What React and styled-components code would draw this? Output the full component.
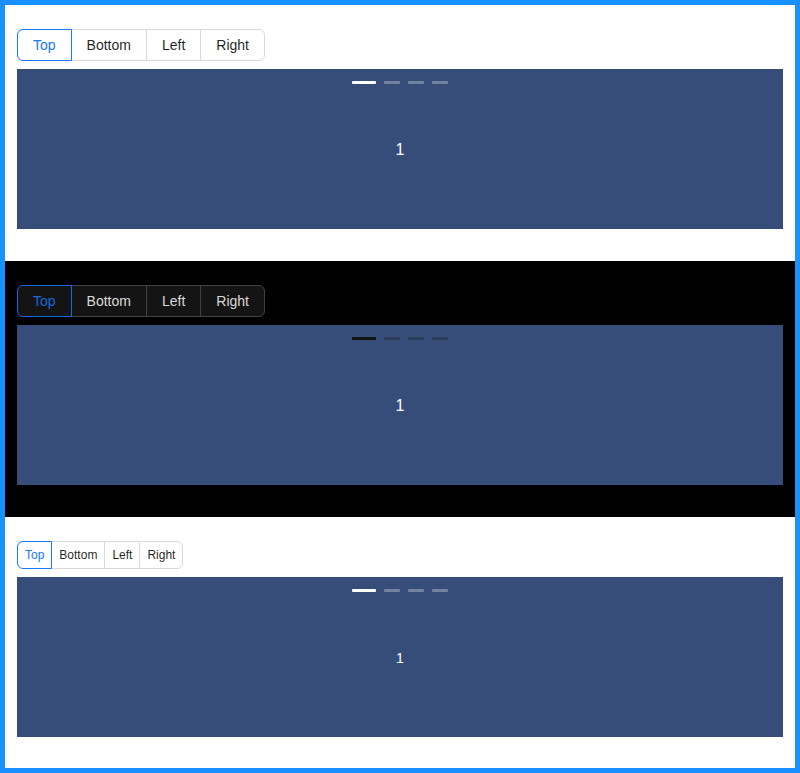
import React, { useState } from 'react';
import styled, { createGlobalStyle, css } from 'styled-components';

const GlobalStyle = createGlobalStyle`
  html, body {
    margin: 0;
    padding: 0;
    background: #ffffff;
  }
  body {
    font-family: 'Liberation Sans', Arial, sans-serif;
  }
`;

const palettes = {
  light: {
    bg: '#ffffff',
    btnBg: '#ffffff',
    btnBorder: '#d9d9d9',
    btnText: 'rgba(0, 0, 0, 0.88)',
    active: '#1677ff',
    dot: '#ffffff',
  },
  dark: {
    bg: '#000000',
    btnBg: '#141414',
    btnBorder: '#424242',
    btnText: 'rgba(255, 255, 255, 0.85)',
    active: '#1668dc',
    dot: '#141414',
  },
};

const sizes = {
  middle: { height: 32, font: 14, pad: 15, radius: 6, slideFont: 16 },
  small: { height: 28, font: 12, pad: 7, radius: 6, slideFont: 14 },
};

const positions = ['Top', 'Bottom', 'Left', 'Right'];

const Frame = styled.div`
  box-sizing: border-box;
  width: 800px;
  height: 773px;
  border: 5px solid #1890ff;
  overflow: hidden;
`;

const Section = styled.section`
  display: flex;
  flex-direction: column;
  gap: 8px;
  padding: 24px 12px 32px;
  background: ${({ palette }) => palette.bg};
`;

const Group = styled.div`
  display: flex;
  align-self: flex-start;
`;

const RadioButton = styled.button`
  box-sizing: border-box;
  height: ${({ size }) => size.height}px;
  padding: 0 ${({ size }) => size.pad}px;
  margin: 0;
  margin-left: -1px;
  border: 1px solid ${({ palette }) => palette.btnBorder};
  background: ${({ palette }) => palette.btnBg};
  color: ${({ palette }) => palette.btnText};
  font-family: 'Liberation Sans', Arial, sans-serif;
  font-size: ${({ size }) => size.font}px;
  line-height: ${({ size }) => size.height - 2}px;
  cursor: pointer;
  position: relative;

  &:first-child {
    margin-left: 0;
    border-radius: ${({ size }) => `${size.radius}px 0 0 ${size.radius}px`};
  }
  &:last-child {
    border-radius: ${({ size }) => `0 ${size.radius}px ${size.radius}px 0`};
  }

  ${({ checked, palette }) =>
    checked &&
    css`
      z-index: 1;
      border-color: ${palette.active};
      color: ${palette.active};
    `}
`;

const Slide = styled.div`
  position: relative;
  height: 160px;
  overflow: hidden;
  background: #364d79;
  color: #ffffff;
  font-family: 'Liberation Sans', Arial, sans-serif;
  font-size: ${({ fontSize }) => fontSize}px;
  line-height: 162px;
  text-align: center;
`;

const Dots = styled.ul`
  position: absolute;
  top: 12px;
  left: 0;
  right: 0;
  display: flex;
  justify-content: center;
  gap: 8px;
  margin: 0;
  padding: 0;
  list-style: none;
  line-height: 0;
`;

const Dot = styled.li`
  width: ${({ active }) => (active ? 24 : 16)}px;
  height: 3px;
  border-radius: 1px;
  background: ${({ palette }) => palette.dot};
  opacity: ${({ active }) => (active ? 1 : 0.3)};
`;

const Demo = ({ theme, size }) => {
  const [position, setPosition] = useState('Top');
  const palette = palettes[theme];
  const s = sizes[size];

  return (
    <Section palette={palette}>
      <Group>
        {positions.map(p => (
          <RadioButton
            key={p}
            palette={palette}
            size={s}
            checked={p === position}
            onClick={() => setPosition(p)}
          >
            {p}
          </RadioButton>
        ))}
      </Group>
      <Slide fontSize={s.slideFont}>
        <Dots>
          {[0, 1, 2, 3].map(i => (
            <Dot key={i} active={i === 0} palette={palette} />
          ))}
        </Dots>
        1
      </Slide>
    </Section>
  );
};

export default function App() {
  return (
    <>
      <GlobalStyle />
      <Frame>
        <Demo theme="light" size="middle" />
        <Demo theme="dark" size="middle" />
        <Demo theme="light" size="small" />
      </Frame>
    </>
  );
}
